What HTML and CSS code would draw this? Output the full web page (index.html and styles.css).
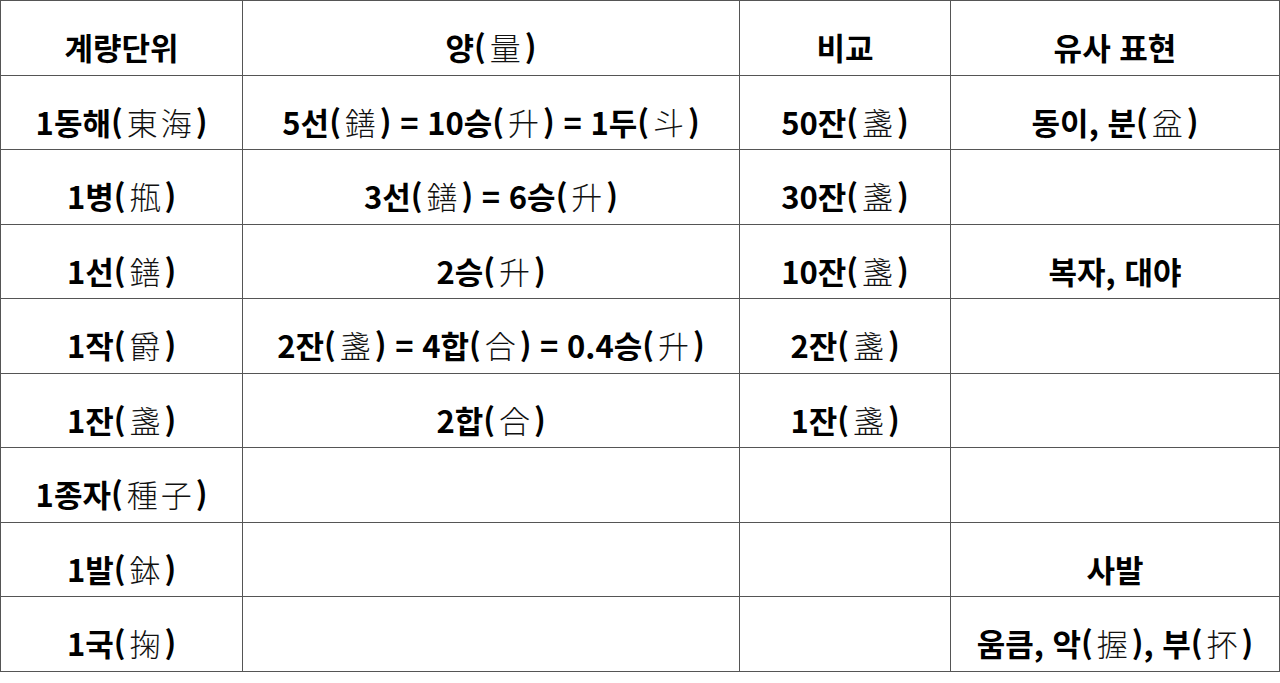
FILE: index.html
```html
<!DOCTYPE html>
<html lang="ko">
<head>
<meta charset="utf-8">
<title>계량단위</title>
<link rel="stylesheet" href="styles.css">
</head>
<body>
<table class="units">
  <colgroup>
    <col class="c1">
    <col class="c2">
    <col class="c3">
    <col class="c4">
  </colgroup>
  <tr>
    <td>계량단위</td>
    <td>양(<span class="h">量</span>)</td>
    <td>비교</td>
    <td>유사 표현</td>
  </tr>
  <tr>
    <td>1동해(<span class="h">東海</span>)</td>
    <td>5선(<span class="h">鐥</span>) = 10승(<span class="h">升</span>) = 1두(<span class="h">斗</span>)</td>
    <td>50잔(<span class="h">盞</span>)</td>
    <td>동이, 분(<span class="h">盆</span>)</td>
  </tr>
  <tr>
    <td>1병(<span class="h">甁</span>)</td>
    <td>3선(<span class="h">鐥</span>) = 6승(<span class="h">升</span>)</td>
    <td>30잔(<span class="h">盞</span>)</td>
    <td></td>
  </tr>
  <tr>
    <td>1선(<span class="h">鐥</span>)</td>
    <td>2승(<span class="h">升</span>)</td>
    <td>10잔(<span class="h">盞</span>)</td>
    <td>복자, 대야</td>
  </tr>
  <tr>
    <td>1작(<span class="h">爵</span>)</td>
    <td>2잔(<span class="h">盞</span>) = 4합(<span class="h">合</span>) = 0.4승(<span class="h">升</span>)</td>
    <td>2잔(<span class="h">盞</span>)</td>
    <td></td>
  </tr>
  <tr>
    <td>1잔(<span class="h">盞</span>)</td>
    <td>2합(<span class="h">合</span>)</td>
    <td>1잔(<span class="h">盞</span>)</td>
    <td></td>
  </tr>
  <tr>
    <td>1종자(<span class="h">種子</span>)</td>
    <td></td>
    <td></td>
    <td></td>
  </tr>
  <tr>
    <td>1발(<span class="h">鉢</span>)</td>
    <td></td>
    <td></td>
    <td>사발</td>
  </tr>
  <tr>
    <td>1국(<span class="h">掬</span>)</td>
    <td></td>
    <td></td>
    <td>움큼, 악(<span class="h">握</span>), 부(<span class="h">抔</span>)</td>
  </tr>
</table>
</body>
</html>
```
FILE: styles.css
```css
html, body {
  margin: 0;
  padding: 0;
  background: #ffffff;
}

.units {
  border-collapse: collapse;
  table-layout: fixed;
  width: 1279px;
  font-family: "Noto Sans CJK KR", "Noto Sans", sans-serif;
  font-weight: 700;
  font-size: 31px;
  color: #000000;
}

.c1 { width: 242px; }
.c2 { width: 497px; }
.c3 { width: 211px; }
.c4 { width: 329px; }

.units tr {
  height: 74.5px;
}

.units td {
  border: 1px solid #555555;
  text-align: center;
  vertical-align: middle;
  padding: 18px 0 0 0;
  line-height: 1.2;
  white-space: nowrap;
}

.h {
  font-weight: 300;
  color: #111111;
  padding: 0 1px 0 4px;
  letter-spacing: 3px;
}
```
